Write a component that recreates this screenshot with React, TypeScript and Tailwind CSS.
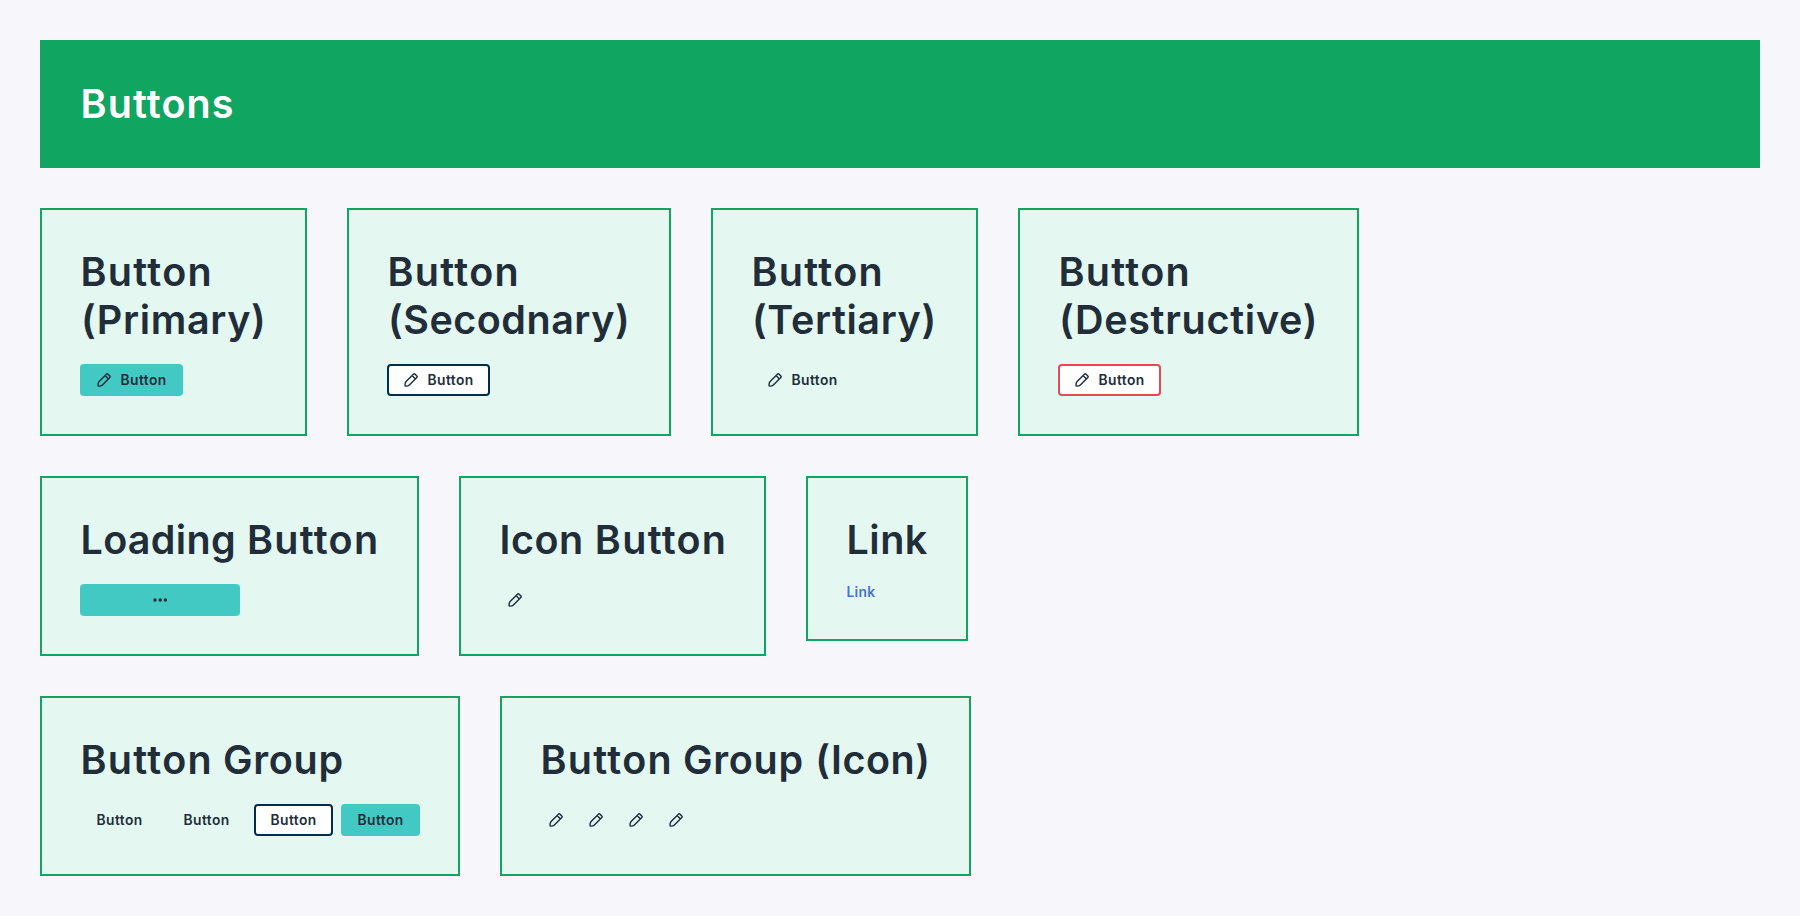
import type { ReactNode } from "react";
import clsx from "clsx";

function PencilIcon() {
  return (
    <svg
      viewBox="0 0 16 16"
      className="size-4 shrink-0"
      fill="none"
      stroke="currentColor"
      strokeWidth="1.45"
      strokeLinecap="round"
      strokeLinejoin="round"
      aria-hidden="true"
    >
      <path d="M10.4 2.2a1.2 1.2 0 0 1 1.7 0l1.7 1.7a1.2 1.2 0 0 1 0 1.7L6.4 13c-.8.8-2 1.1-3.5 1.1-.6 0-.9-.3-.9-.9 0-1.5.3-2.7 1.1-3.6zM9.1 3.6l3.3 3.3" />
    </svg>
  );
}

const variants = {
  primary: "bg-[#43c9c3]",
  secondary: "border-2 border-[#002d4b] bg-white",
  tertiary: "",
  destructive: "border-2 border-[#e84855] bg-white",
};

type Variant = keyof typeof variants;

function Button({ variant, icon = false }: { variant: Variant; icon?: boolean }) {
  return (
    <button
      className={clsx(
        "flex h-8 items-center justify-center gap-2 rounded text-[13.8px] leading-4 font-semibold tracking-[0.45px] text-[#212d39]",
        icon ? "w-[103px]" : "w-[79px]",
        variants[variant],
      )}
    >
      {icon && <PencilIcon />}
      <span className="w-[47px] pl-[0.5px] text-left">Button</span>
    </button>
  );
}

function IconButton() {
  return (
    <button className="flex size-8 items-center justify-center text-[#212d39]" aria-label="Edit">
      <PencilIcon />
    </button>
  );
}

function LoadingButton() {
  return (
    <button className="flex h-8 w-40 items-center justify-center rounded bg-[#43c9c3] text-[#212d39]" aria-label="Loading">
      <svg viewBox="0 0 16 16" className="size-4" fill="currentColor" aria-hidden="true">
        <circle cx="3" cy="8" r="1.7" />
        <circle cx="8.2" cy="8" r="1.7" />
        <circle cx="13.4" cy="8" r="1.7" />
      </svg>
    </button>
  );
}

function Card({ title, className, children }: { title: ReactNode; className: string; children: ReactNode }) {
  return (
    <section className={clsx("flex shrink-0 flex-col items-start gap-5 border-2 border-[#11a562] bg-[#e4f8f1] p-[38px]", className)}>
      <h2 className="pl-[0.5px] text-[39.5px] leading-12 font-semibold whitespace-nowrap text-[#212d39]">{title}</h2>
      {children}
    </section>
  );
}

const ButtonWord = () => <span className="tracking-[1.3px]">Button</span>;

export default function App() {
  return (
    <main className="flex min-h-screen flex-col gap-10 bg-[#f6f6fb] p-10 font-['Inter','Liberation_Sans',sans-serif]">
      <header className="bg-[#11a562] p-10">
        <h1 className="pl-[0.5px] text-[39.5px] leading-12 font-semibold tracking-[1.1px] text-white">Buttons</h1>
      </header>

      <div className="flex items-start gap-10">
        <Card className="w-[267px]" title={<><ButtonWord /><br /><span className="ml-[0.5px] tracking-[0.65px]">(Primary)</span></>}>
          <Button variant="primary" icon />
        </Card>
        <Card className="w-[324px]" title={<><ButtonWord /><br /><span className="ml-[0.5px] tracking-[0.5px]">(Secodnary)</span></>}>
          <Button variant="secondary" icon />
        </Card>
        <Card className="w-[267px]" title={<><ButtonWord /><br /><span className="ml-[0.5px] tracking-[0.6px]">(Tertiary)</span></>}>
          <Button variant="tertiary" icon />
        </Card>
        <Card className="w-[341px]" title={<><ButtonWord /><br /><span className="ml-[0.5px] tracking-[0.7px]">(Destructive)</span></>}>
          <Button variant="destructive" icon />
        </Card>
      </div>

      <div className="flex items-start gap-10">
        <Card className="w-[379px]" title={<><span className="tracking-[0.3px]">Loading</span><span className="tracking-[1px]"> </span><ButtonWord /></>}>
          <LoadingButton />
        </Card>
        <Card className="w-[307px]" title={<><span className="tracking-[0.5px]">Icon</span><span className="tracking-[1.2px]"> </span><ButtonWord /></>}>
          <IconButton />
        </Card>
        <Card className="w-[162px]" title={<span className="tracking-[0.5px]">Link</span>}>
          <a href="#" className="pl-[0.5px] text-[13.8px] leading-[17px] font-semibold tracking-[0.3px] text-[#4472cf]">Link</a>
        </Card>
      </div>

      <div className="flex items-start gap-10">
        <Card className="w-[420px]" title={<><ButtonWord /> <span className="tracking-[0.7px]">Group</span></>}>
          <div className="flex gap-2">
            <Button variant="tertiary" />
            <Button variant="tertiary" />
            <Button variant="secondary" />
            <Button variant="primary" />
          </div>
        </Card>
        <Card className="w-[471px]" title={<><ButtonWord /> <span className="tracking-[0.7px]">Group</span><span className="tracking-[1.6px]"> </span><span className="tracking-[0.5px]">(Icon)</span></>}>
          <div className="flex gap-2">
            <IconButton />
            <IconButton />
            <IconButton />
            <IconButton />
          </div>
        </Card>
      </div>
    </main>
  );
}
